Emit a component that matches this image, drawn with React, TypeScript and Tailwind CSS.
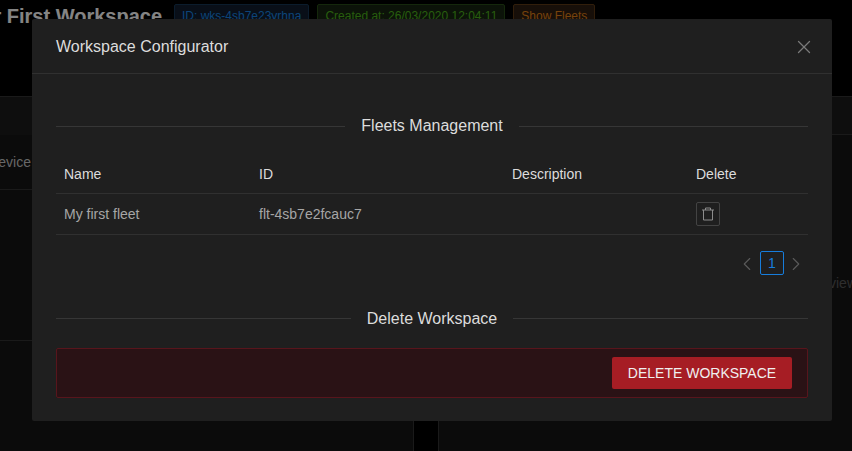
import { X, ChevronLeft, ChevronRight } from "lucide-react"

function SectionTitle({ title }: { title: string }) {
  return (
    <div className="flex items-center gap-4 h-6 text-base text-[#dcdcdc]">
      <div className="flex-1 h-px bg-[#363636]" />
      <span>{title}</span>
      <div className="flex-1 h-px bg-[#363636]" />
    </div>
  )
}

function Background() {
  return (
    <div className="h-[451px] bg-black overflow-hidden flex flex-col">
      <div className="h-[97px] shrink-0 border-b border-[#303030] flex items-start gap-2 pt-[4px]">
        <div className="w-[166px] h-[32px] shrink-0 flex justify-end overflow-hidden pr-[4px]">
          <h1 className="leading-[24px] text-xl font-bold text-[#f0f0f0] whitespace-nowrap shrink-0">
            Your First Workspace
          </h1>
        </div>
        <span className="h-[24px] px-[7px] rounded-[2px] border border-[#153450] bg-[#111d2c] text-[#177ddc] text-[12px] leading-[22px]">
          ID: wks-4sb7e23yrhna
        </span>
        <span className="h-[24px] px-[7px] rounded-[2px] border border-[#274916] bg-[#162312] text-[#49aa19] text-[12px] leading-[22px]">
          Created at: 26/03/2020 12:04:11
        </span>
        <span className="h-[24px] px-[7px] rounded-[2px] border border-[#593815] bg-[#2b1d11] text-[#d87a16] text-[12px] leading-[22px]">
          Show Fleets
        </span>
      </div>
      <div className="flex-1 flex gap-6">
        <div className="w-[414px] bg-[#141414] border-r border-[#303030]">
          <div className="h-[38px] bg-[#1a1a1a]" />
          <div className="h-[55px] border-b border-[#303030] flex justify-end overflow-hidden pr-[382px]">
            <span className="text-sm text-[#bcbcbc] leading-[54px] shrink-0">device</span>
          </div>
          <div className="h-[151px] border-b border-[#303030]" />
        </div>
        <div className="flex-1 bg-[#141414] border-l border-[#303030]">
          <div className="h-[38px] bg-[#1a1a1a] border-b border-[#303030]" />
          <div className="pl-[390px] pt-[138px] text-sm text-[#555555] leading-5">view</div>
        </div>
      </div>
    </div>
  )
}

export default function App() {
  const headCell = "px-2 pt-[2px] text-left font-normal text-sm text-[#dcdcdc]"
  return (
    <div className="relative h-[451px] w-[852px] overflow-hidden font-['Liberation_Sans',Arial,sans-serif]">
      <Background />
      <div className="absolute inset-0 bg-black/45" />
      <div className="absolute left-[32px] top-[19px] w-[800px] h-[402px] rounded-[2px] bg-[#1f1f1f]">
        <div className="h-[55px] border-b border-[#303030] flex items-center justify-between pt-[2px] pl-6 pr-[17px]">
          <span className="text-base text-[#dcdcdc]">Workspace Configurator</span>
          <X className="w-[22px] h-[22px] text-[#7a7a7a]" strokeWidth={1.4} />
        </div>
        <div className="px-6 pt-[40px]">
          <SectionTitle title="Fleets Management" />
          <table className="w-[752px] mt-4 table-fixed border-collapse">
            <tbody>
              <tr className="h-[39px] border-b border-[#303030]">
                <th className={`${headCell} w-[195px]`}>Name</th>
                <th className={`${headCell} w-[253px]`}>ID</th>
                <th className={`${headCell} w-[184px]`}>Description</th>
                <th className={headCell}>Delete</th>
              </tr>
              <tr className="h-[41px] border-b border-[#303030] text-sm text-[#a6a6a6]">
                <td className="px-2">My first fleet</td>
                <td className="px-2">flt-4sb7e2fcauc7</td>
                <td className="px-2" />
                <td className="px-2">
                  <button className="w-6 h-6 rounded-[2px] border border-[#434343] flex items-center justify-center">
                    <svg viewBox="0 0 14 14" className="w-[14px] h-[14px] text-[#8c8c8c]" fill="none" stroke="currentColor" strokeWidth="1">
                      <path d="M1 3h12M2.5 3v10h9V3M4.5 3V1h5v2" />
                    </svg>
                  </button>
                </td>
              </tr>
            </tbody>
          </table>
          <div className="flex items-center justify-end gap-[2px] mt-4">
            <ChevronLeft className="w-[22px] h-[22px] mt-[2px] text-[#5a5a5a]" strokeWidth={1.2} />
            <span className="w-6 h-6 rounded-[2px] border border-[#177ddc] text-[#177ddc] text-sm leading-[23px] text-center">1</span>
            <ChevronRight className="w-[22px] h-[22px] mt-[2px] -ml-px mr-px text-[#5a5a5a]" strokeWidth={1.2} />
          </div>
          <div className="mt-[32px]">
            <SectionTitle title="Delete Workspace" />
          </div>
          <div className="mt-[17px] h-[50px] rounded-[2px] border border-[#58151c] bg-[#2a1215] flex items-center justify-end pr-[15px]">
            <button className="h-8 w-[180px] rounded-[2px] bg-[#a61d24] text-sm text-[#f0f0f0]">DELETE WORKSPACE</button>
          </div>
        </div>
      </div>
    </div>
  )
}
